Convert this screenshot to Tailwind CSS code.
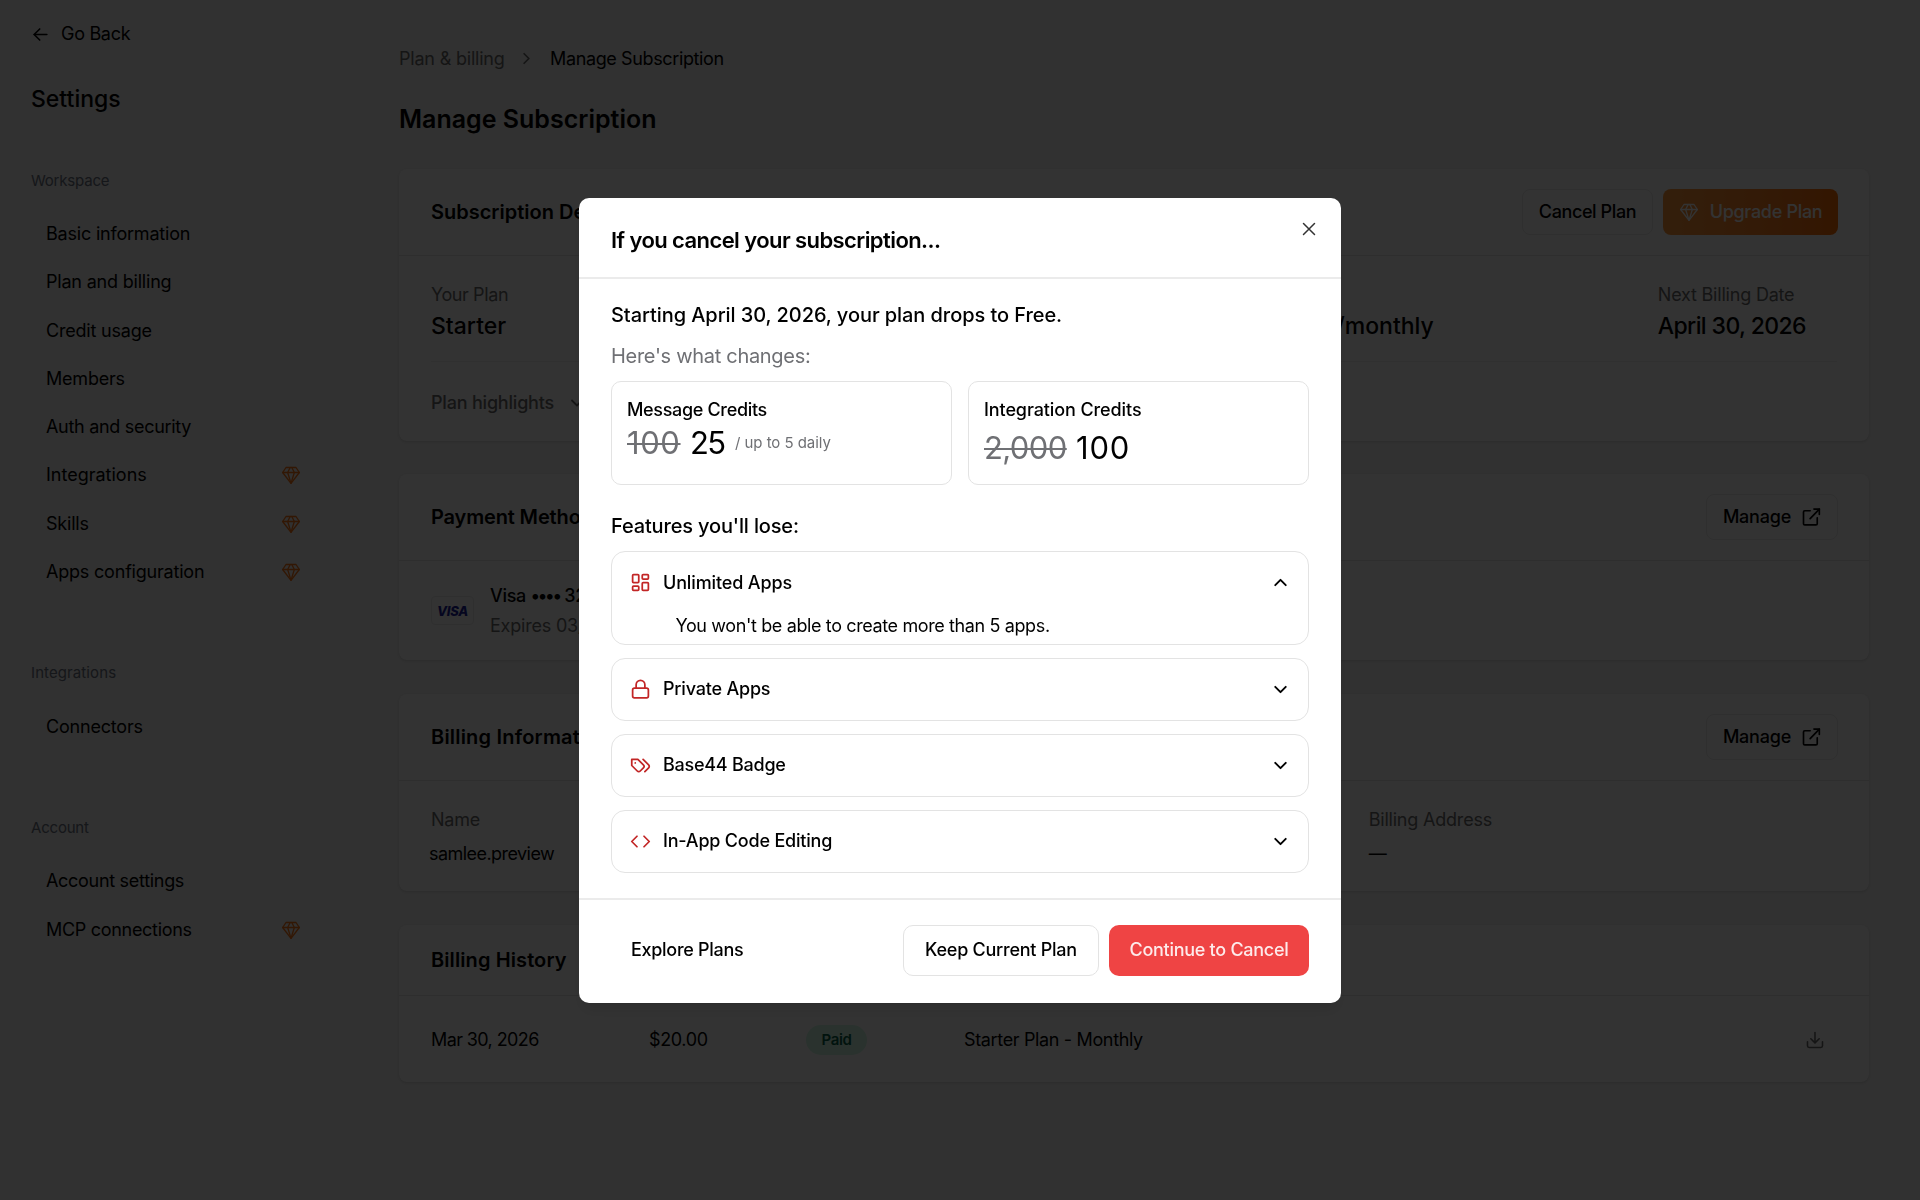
<!DOCTYPE html>
<html lang="en">
<head>
    <meta charset="UTF-8">
    <title>Manage Subscription - Settings</title>
    <meta name="viewport" content="width=device-width, initial-scale=1">
    <script src="https://cdn.jsdelivr.net/npm/@tailwindcss/browser@4"></script>
</head>
<body class="bg-[#f3f3f3] text-black text-[18px] leading-6 font-['Inter',sans-serif] tracking-[-0.2px] h-screen overflow-hidden">
    <!-- Icon sprite -->
    <svg class="hidden">
        <symbol id="gem" viewBox="0 0 24 24" fill="none" stroke="currentColor" stroke-width="1.6" stroke-linejoin="round" stroke-linecap="round">
            <path d="M6 3h12l4 6-10 13L2 9Z" /><path d="M11 3 8 9l4 13 4-13-3-6" /><path d="M2 9h20" />
        </symbol>
        <symbol id="external" viewBox="0 0 24 24" fill="none" stroke="currentColor" stroke-width="2" stroke-linejoin="round" stroke-linecap="round">
            <path d="M11 4.5H4.5A1.5 1.5 0 0 0 3 6v14a1.5 1.5 0 0 0 1.5 1.5h13.5a1.5 1.5 0 0 0 1.5-1.5V13" /><path d="M15.5 2.5H22V9" /><path d="M22 2.5 11 14" />
        </symbol>
        <symbol id="chevron" viewBox="0 0 24 24" fill="none" stroke="currentColor" stroke-width="2.2" stroke-linejoin="round" stroke-linecap="round">
            <path d="m6 9 6 6 6-6" />
        </symbol>
    </svg>

    <div class="flex h-full">
        <!-- Sidebar -->
        <aside class="w-[331px] shrink-0 pl-[31px] pt-[17px]">
            <a class="flex items-center h-[34px] gap-[11px]">
                <svg class="size-[19px]" viewBox="0 0 24 24" fill="none" stroke="currentColor" stroke-width="2" stroke-linecap="round" stroke-linejoin="round"><path d="M20 12H4" /><path d="m11 19-7-7 7-7" /></svg>
                <span class="tracking-[-0.3px]">Go Back</span>
            </a>
            <h2 class="mt-[32px] h-[32px] leading-[32px] text-[23px] font-medium tracking-normal">Settings</h2>

            <h3 class="mt-[56px] h-[20px] leading-[20px] text-[15px] text-[#6b7280]">Workspace</h3>
            <nav class="mt-[19px] pl-[15px] pr-[30px]">
                <a class="flex items-center h-[48.25px]">Basic information</a>
                <a class="flex items-center h-[48.25px]">Plan and billing</a>
                <a class="flex items-center h-[48.25px]">Credit usage</a>
                <a class="flex items-center h-[48.25px]">Members</a>
                <a class="flex items-center h-[48.25px] tracking-[-0.3px]">Auth and security</a>
                <a class="flex items-center justify-between h-[48.25px] tracking-normal">Integrations<svg class="size-[20px] text-[#f97316]"><use href="#gem" /></svg></a>
                <a class="flex items-center justify-between h-[48.25px]">Skills<svg class="size-[20px] text-[#f97316]"><use href="#gem" /></svg></a>
                <a class="flex items-center justify-between h-[48.25px]">Apps configuration<svg class="size-[20px] text-[#f97316]"><use href="#gem" /></svg></a>
            </nav>

            <h3 class="mt-[67px] h-[20px] leading-[20px] text-[15px] tracking-[0.1px] text-[#6b7280]">Integrations</h3>
            <nav class="mt-[20px] pl-[15px] pr-[30px]">
                <a class="flex items-center h-[48.25px]">Connectors</a>
            </nav>

            <h3 class="mt-[67px] h-[20px] leading-[20px] text-[15px] text-[#6b7280]">Account</h3>
            <nav class="mt-[19px] pl-[15px] pr-[30px]">
                <a class="flex items-center h-[48.25px] tracking-[-0.3px]">Account settings</a>
                <a class="flex items-center justify-between h-[48.25px] tracking-[-0.3px]">MCP connections<svg class="size-[20px] text-[#f97316]"><use href="#gem" /></svg></a>
            </nav>
        </aside>

        <!-- Main content -->
        <main class="flex-1 pl-[68px] pr-[51px] pt-[46px]">
            <div class="flex items-center h-[25px] tracking-[-0.37px]">
                <span class="text-[#6b6b6b] w-[118px] tracking-[-0.2px]">Plan &amp; billing</span>
                <svg class="size-[19px] -rotate-90 text-[#6b6b6b] mr-[14px]"><use href="#chevron" /></svg>
                <span>Manage Subscription</span>
            </div>
            <h1 class="mt-[32px] h-[32px] leading-[32px] text-[25px] font-semibold tracking-normal">Manage Subscription</h1>

            <!-- Subscription details -->
            <section class="mt-[34px] h-[272px] bg-white rounded-lg shadow-sm">
                <div class="h-[87px] pl-[32px] pr-[31px] border-b border-[#e5e5e5] flex items-center justify-between">
                    <h2 class="text-[20px] font-semibold tracking-normal">Subscription Details</h2>
                    <div class="flex gap-[10px]">
                        <button class="h-[46px] w-[131px] rounded-lg border border-[#ebebeb] font-medium tracking-[-0.4px]">Cancel Plan</button>
                        <button class="h-[46px] w-[175px] rounded-lg bg-linear-to-r from-[#ff983b] to-[#ff6d00] text-white font-medium flex items-center justify-center gap-[11px] tracking-[-0.3px]">
                            <svg class="size-[20px]"><use href="#gem" /></svg>Upgrade Plan
                        </button>
                    </div>
                </div>
                <div class="mx-[32px] h-[106px] pt-[27px] pr-[31px] flex border-b border-[#f0f0f0]">
                    <div>
                        <p class="text-[#6b6b6b] tracking-[-0.4px]">Your Plan</p>
                        <p class="mt-[5px] leading-7 text-[23px] font-medium tracking-normal">Starter</p>
                    </div>
                    <div class="ml-auto mr-[224px]">
                        <p class="text-[#6b6b6b]">Plan Price</p>
                        <p class="mt-[5px] leading-7 text-[23px] font-medium tracking-normal">$20.00/monthly</p>
                    </div>
                    <div>
                        <p class="text-[#6b6b6b]">Next Billing Date</p>
                        <p class="mt-[5px] leading-7 text-[23px] font-medium tracking-[-0.6px]">April 30, 2026</p>
                    </div>
                </div>
                <div class="h-[81px] pt-px pl-[32px] flex items-center gap-[13px] text-[#6b6b6b] font-medium">
                    Plan highlights
                    <svg class="size-[20px]"><use href="#chevron" /></svg>
                </div>
            </section>

            <!-- Payment method -->
            <section class="mt-[33px] h-[186px] bg-white rounded-lg shadow-sm">
                <div class="h-[87px] pl-[32px] pr-[31px] border-b border-[#e5e5e5] flex items-center justify-between">
                    <h2 class="text-[20px] font-semibold tracking-[-0.15px]">Payment Method</h2>
                    <button class="h-[46px] w-[132px] rounded-lg border border-[#ebebeb] font-medium flex items-center justify-center gap-[10px]">
                        Manage<svg class="size-[20px]"><use href="#external" /></svg>
                    </button>
                </div>
                <div class="h-[99px] pl-[32px] flex items-center gap-[16px]">
                    <div class="w-[43px] h-[29px] rounded border border-[#ebebeb] flex items-center justify-center text-[#1a1f9c] text-[13px] font-extrabold italic">VISA</div>
                    <div class="leading-[30px]">
                        <p class="font-medium tracking-[-0.3px]">Visa <span class="tracking-[-2.3px]">••••</span> 3248</p>
                        <p class="text-[#6b6b6b]">Expires 03/2030</p>
                    </div>
                </div>
            </section>

            <!-- Billing information -->
            <section class="mt-[34px] h-[197px] bg-white rounded-lg shadow-sm">
                <div class="h-[87px] pl-[32px] pr-[31px] border-b border-[#e5e5e5] flex items-center justify-between">
                    <h2 class="text-[20px] font-semibold tracking-[0.2px]">Billing Information</h2>
                    <button class="h-[46px] w-[132px] rounded-lg border border-[#ebebeb] font-medium flex items-center justify-center gap-[10px]">
                        Manage<svg class="size-[20px]"><use href="#external" /></svg>
                    </button>
                </div>
                <div class="pl-[32px] pt-[27px] grid grid-cols-3">
                    <div>
                        <p class="text-[#6b6b6b]">Name</p>
                        <p class="mt-[10px] -ml-[2px] tracking-[-0.55px]">samlee.preview</p>
                    </div>
                    <div>
                        <p class="text-[#6b6b6b]">Email</p>
                        <p class="mt-[10px]">—</p>
                    </div>
                    <div class="-ml-[21px]">
                        <p class="text-[#6b6b6b]">Billing Address</p>
                        <p class="mt-[10px]">—</p>
                    </div>
                </div>
            </section>

            <!-- Billing history -->
            <section class="mt-[34px] h-[157px] bg-white rounded-lg shadow-sm">
                <div class="h-[71px] pl-[32px] border-b border-[#e5e5e5] flex items-center">
                    <h2 class="text-[20px] font-semibold tracking-[0.1px]">Billing History</h2>
                </div>
                <div class="h-[86px] pt-[2px] pl-[32px] pr-[44px] flex items-center tracking-[-0.35px]">
                    <span class="w-[218px] tracking-[-0.6px]">Mar 30, 2026</span>
                    <span class="w-[157px]">$20.00</span>
                    <span class="w-[158px]"><span class="inline-flex items-center justify-center w-[61px] h-[30px] rounded-full bg-[#d1fae5] text-[#065f46] text-[15px] font-semibold">Paid</span></span>
                    <span>Starter Plan - Monthly</span>
                    <svg class="size-[20px] ml-auto mb-px text-[#6b6b6b]" viewBox="0 0 24 24" fill="none" stroke="currentColor" stroke-width="1.9" stroke-linecap="round" stroke-linejoin="round"><path d="M12 3v12" /><path d="m7 10.5 5 5 5-5" /><path d="M3 14v5a2 2 0 0 0 2 2h14a2 2 0 0 0 2-2v-5" /></svg>
                </div>
            </section>
        </main>
    </div>

    <!-- Overlay -->
    <div class="fixed inset-0 bg-black/80"></div>

    <!-- Cancel dialog -->
    <div class="fixed left-[579px] top-[197.5px] w-[762px] h-[805px] bg-white rounded-[10px] shadow-lg flex flex-col">
        <div class="relative h-[81.5px] px-[32px] border-b-2 border-[#ebebeb] shrink-0">
            <h2 class="pt-[27.5px] leading-[30px] text-[22px] font-semibold tracking-[-0.58px]">If you cancel your subscription...</h2>
            <svg class="absolute right-[25px] top-[24.5px] size-[14px] text-[#333]" viewBox="0 0 14 14" fill="none" stroke="currentColor" stroke-width="1.5" stroke-linecap="round"><path d="m1.5 1.5 11 11M12.5 1.5l-11 11" /></svg>
        </div>

        <div class="flex-1 px-[32px] pt-[21px]">
            <p class="h-[30px] leading-[30px] text-[20px] font-medium tracking-[-0.07px]">Starting April 30, 2026, your plan drops to Free.</p>
            <p class="mt-[11px] h-[30px] leading-[30px] text-[20px] text-[#6f7074] tracking-[-0.3px]">Here's what changes:</p>

            <div class="mt-[9.5px] grid grid-cols-2 gap-[16px]">
                <div class="h-[104px] rounded-[10px] border border-[#e3e3e3] px-[15px] pt-[16.5px]">
                    <p class="font-medium tracking-[-0.33px]">Message Credits</p>
                    <div class="mt-[3px] h-[36px] flex items-center">
                        <span class="text-[31px] text-[#6f7074] line-through decoration-2 w-[63px] tracking-[0.6px]">100</span>
                        <span class="text-[31px] w-[45px] tracking-[-1.6px]">25</span>
                        <span class="text-[15px] text-[#6f7074] tracking-[-0.05px]">/ up to 5 daily</span>
                    </div>
                </div>
                <div class="h-[104px] rounded-[10px] border border-[#e3e3e3] px-[15px] pt-[16.5px]">
                    <p class="font-medium tracking-[-0.1px]">Integration Credits</p>
                    <div class="mt-[8px] h-[36px] flex items-center">
                        <span class="text-[31px] text-[#6f7074] line-through decoration-2 w-[92px] tracking-[-0.6px]">2,000</span>
                        <span class="text-[31px] tracking-[0.8px]">100</span>
                    </div>
                </div>
            </div>

            <p class="mt-[26px] h-[30px] leading-[30px] text-[20px] font-medium tracking-[-0.15px]">Features you'll lose:</p>

            <div class="mt-[10px] flex flex-col gap-[13px]">
                <div class="h-[94px] rounded-[14px] border border-[#e3e3e3]">
                    <div class="h-[62px] px-[17.5px] flex items-center">
                        <svg class="size-[21px] mr-[12.5px] text-[#c22626]" viewBox="0 0 24 24" fill="none" stroke="currentColor" stroke-width="2" stroke-linejoin="round"><rect x="3" y="3" width="7" height="9" rx="1" /><rect x="14" y="3" width="7" height="5" rx="1" /><rect x="14" y="12" width="7" height="9" rx="1" /><rect x="3" y="16" width="7" height="5" rx="1" /></svg>
                        <span class="font-medium tracking-[-0.14px]">Unlimited Apps</span>
                        <svg class="size-[21px] ml-auto rotate-180"><use href="#chevron" /></svg>
                    </div>
                    <p class="pl-[63.5px] tracking-[-0.38px]">You won't be able to create more than 5 apps.</p>
                </div>
                <div class="h-[63px] rounded-[14px] border border-[#e3e3e3] px-[17.5px] flex items-center">
                    <svg class="size-[21px] mr-[12.5px] text-[#c22626]" viewBox="0 0 24 24" fill="none" stroke="currentColor" stroke-width="2" stroke-linejoin="round" stroke-linecap="round"><rect x="3" y="10.5" width="18" height="11" rx="2" /><path d="M7 10.5v-4a5 5 0 0 1 10 0v4" /></svg>
                    <span class="font-medium tracking-[-0.2px]">Private Apps</span>
                    <svg class="size-[21px] ml-auto"><use href="#chevron" /></svg>
                </div>
                <div class="h-[63px] rounded-[14px] border border-[#e3e3e3] px-[17.5px] flex items-center">
                    <svg class="size-[21px] mr-[12.5px] text-[#c22626]" viewBox="0 0 24 24" fill="none" stroke="currentColor" stroke-width="2" stroke-linejoin="round" stroke-linecap="round"><path d="M9 5H2v7l6.29 6.29c.94.94 2.48.94 3.42 0l3.58-3.58c.94-.94.94-2.48 0-3.42L9 5Z" /><path d="M6 9.01V9" /><path d="m15 5 6.3 6.3a2.4 2.4 0 0 1 0 3.4L17 19" /></svg>
                    <span class="font-medium tracking-[-0.25px]">Base44 Badge</span>
                    <svg class="size-[21px] ml-auto"><use href="#chevron" /></svg>
                </div>
                <div class="h-[63px] rounded-[14px] border border-[#e3e3e3] px-[17.5px] flex items-center">
                    <svg class="size-[21px] mr-[12.5px] text-[#c22626]" viewBox="0 0 24 24" fill="none" stroke="currentColor" stroke-width="2" stroke-linejoin="round" stroke-linecap="round"><path d="m16 18 6-6-6-6" /><path d="m8 6-6 6 6 6" /></svg>
                    <span class="font-medium tracking-[-0.2px]">In-App Code Editing</span>
                    <svg class="size-[21px] ml-auto"><use href="#chevron" /></svg>
                </div>
            </div>
        </div>

        <div class="h-[105px] px-[32px] pb-[2px] border-t-2 border-[#ebebeb] flex items-center gap-[10px] shrink-0 font-medium">
            <button class="h-[51px] px-[20px] mr-auto tracking-[-0.3px]">Explore Plans</button>
            <button class="h-[51px] w-[196px] rounded-[10px] border border-[#e3e3e3] tracking-[-0.25px]">Keep Current Plan</button>
            <button class="h-[51px] w-[200px] rounded-[10px] bg-[#ef4444] text-[#fdeaea] tracking-[-0.28px]">Continue to Cancel</button>
        </div>
    </div>
</body>
</html>
